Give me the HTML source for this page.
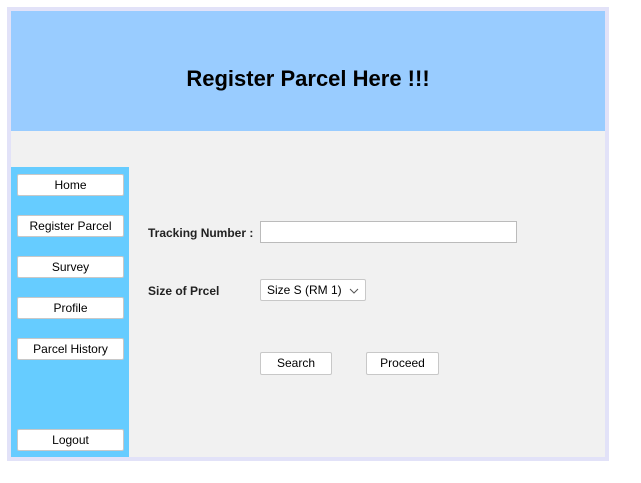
<!DOCTYPE html>
<html><head><style>
body{margin:0;width:641px;height:483px;background:#fff;position:relative;font-family:"Liberation Sans",sans-serif;overflow:hidden}
.a{position:absolute;box-sizing:border-box}
.btn{position:absolute;box-sizing:border-box;background:#fff;border:1px solid #c8c8c8;border-radius:2px;font-size:12px;text-align:center;color:#000}
.lbl{position:absolute;font-size:12px;font-weight:bold;color:#222}
</style></head><body>
<div class="a" style="left:7px;top:7px;width:602px;height:454px;background:#e2e2f8"></div>
<div class="a" style="left:11px;top:11px;width:594px;height:446px;background:#f1f1f1"></div>
<div class="a" style="left:11px;top:11px;width:594px;height:120px;background:#99ccff"></div>
<div class="a" style="left:11px;top:60px;width:594px;text-align:center;font-size:22px;font-weight:bold;line-height:38px">Register Parcel Here !!!</div>
<div class="a" style="left:11px;top:167px;width:118px;height:290px;background:#66ccff"></div>
<div class="btn" style="left:17px;top:174px;width:107px;height:22px;line-height:20px">Home</div>
<div class="btn" style="left:17px;top:215px;width:107px;height:22px;line-height:20px">Register Parcel</div>
<div class="btn" style="left:17px;top:256px;width:107px;height:22px;line-height:20px">Survey</div>
<div class="btn" style="left:17px;top:297px;width:107px;height:22px;line-height:20px">Profile</div>
<div class="btn" style="left:17px;top:338px;width:107px;height:22px;line-height:20px">Parcel History</div>
<div class="btn" style="left:17px;top:429px;width:107px;height:22px;line-height:20px">Logout</div>
<div class="lbl" style="left:148px;top:226px">Tracking Number :</div>
<div class="a" style="left:260px;top:221px;width:257px;height:22px;background:#fff;border:1px solid #bbb"></div>
<div class="lbl" style="left:148px;top:284px">Size of Prcel</div>
<div class="btn" style="left:260px;top:279px;width:106px;height:22px;line-height:20px;text-align:left;padding-left:6px">Size S (RM 1)
<svg style="position:absolute;right:6px;top:8px" width="10" height="6"><path d="M1 1L5 5L9 1" stroke="#555" fill="none"/></svg></div>
<div class="btn" style="left:260px;top:352px;width:72px;height:23px;line-height:21px">Search</div>
<div class="btn" style="left:366px;top:352px;width:73px;height:23px;line-height:21px">Proceed</div>
</body></html>
